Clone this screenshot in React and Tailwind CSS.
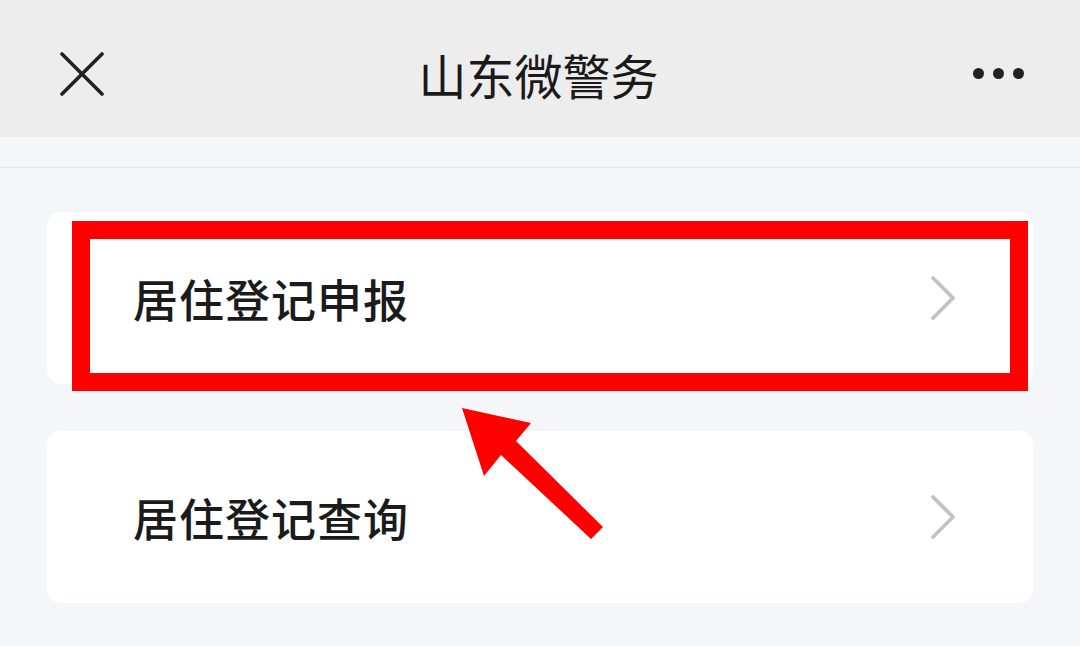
const font = { fontFamily: '"Noto Sans CJK SC", "Noto Sans", sans-serif' };

function Chevron() {
  return (
    <svg width="28" height="44" viewBox="0 0 28 44" fill="none" className="shrink-0">
      <path d="M4 2 L24 22 L4 42" stroke="#c2c2c2" strokeWidth="3.8" strokeLinecap="round" strokeLinejoin="round" />
    </svg>
  );
}

function Row({ label }) {
  return (
    <div className="flex h-[172px] items-center justify-between rounded-[14px] bg-white pl-[86px] pr-[76px]">
      <span className="text-[45px] font-medium leading-none tracking-[1px] text-[#1b1b1b]">{label}</span>
      <Chevron />
    </div>
  );
}

export default function App() {
  return (
    <div className="h-[646px] w-[1080px] overflow-hidden bg-[#f5f6f9]" style={font}>
      {/* Header */}
      <div className="flex h-[137px] items-center justify-between bg-[#ededed] pl-[60px] pr-[56px] pt-[10px]">
        <svg width="44" height="44" viewBox="0 0 44 44">
          <path d="M2 2 L42 42 M42 2 L2 42" stroke="#222" strokeWidth="3.6" strokeLinecap="round" />
        </svg>
        <h1 className="text-[48px] font-normal leading-none tracking-[0px] text-[#1a1a1a]">山东微警务</h1>
        <div className="flex items-center gap-[9px]">
          <span className="h-[11px] w-[11px] rounded-full bg-[#222]" />
          <span className="h-[11px] w-[11px] rounded-full bg-[#222]" />
          <span className="h-[11px] w-[11px] rounded-full bg-[#222]" />
        </div>
      </div>
      <div className="h-[31px] border-b border-[#e6e7ea] bg-[#f6f7f9]" />

      {/* Content */}
      <div className="relative flex flex-col gap-[47px] px-[47px] pt-[44px]">
        <Row label="居住登记申报" />
        <Row label="居住登记查询" />

        {/* Highlight box */}
        <div className="pointer-events-none absolute left-[72px] top-[53px] h-[170px] w-[956px] border-[18px] border-[#ff0000]" />

        {/* Arrow */}
        <svg className="pointer-events-none absolute left-0 top-0" width="1080" height="478" viewBox="0 168 1080 478">
          <polygon
            points="462,408 531,423 516,441 603,527 591,539 501,455 484,476"
            fill="#ff0000"
          />
        </svg>
      </div>
    </div>
  );
}
